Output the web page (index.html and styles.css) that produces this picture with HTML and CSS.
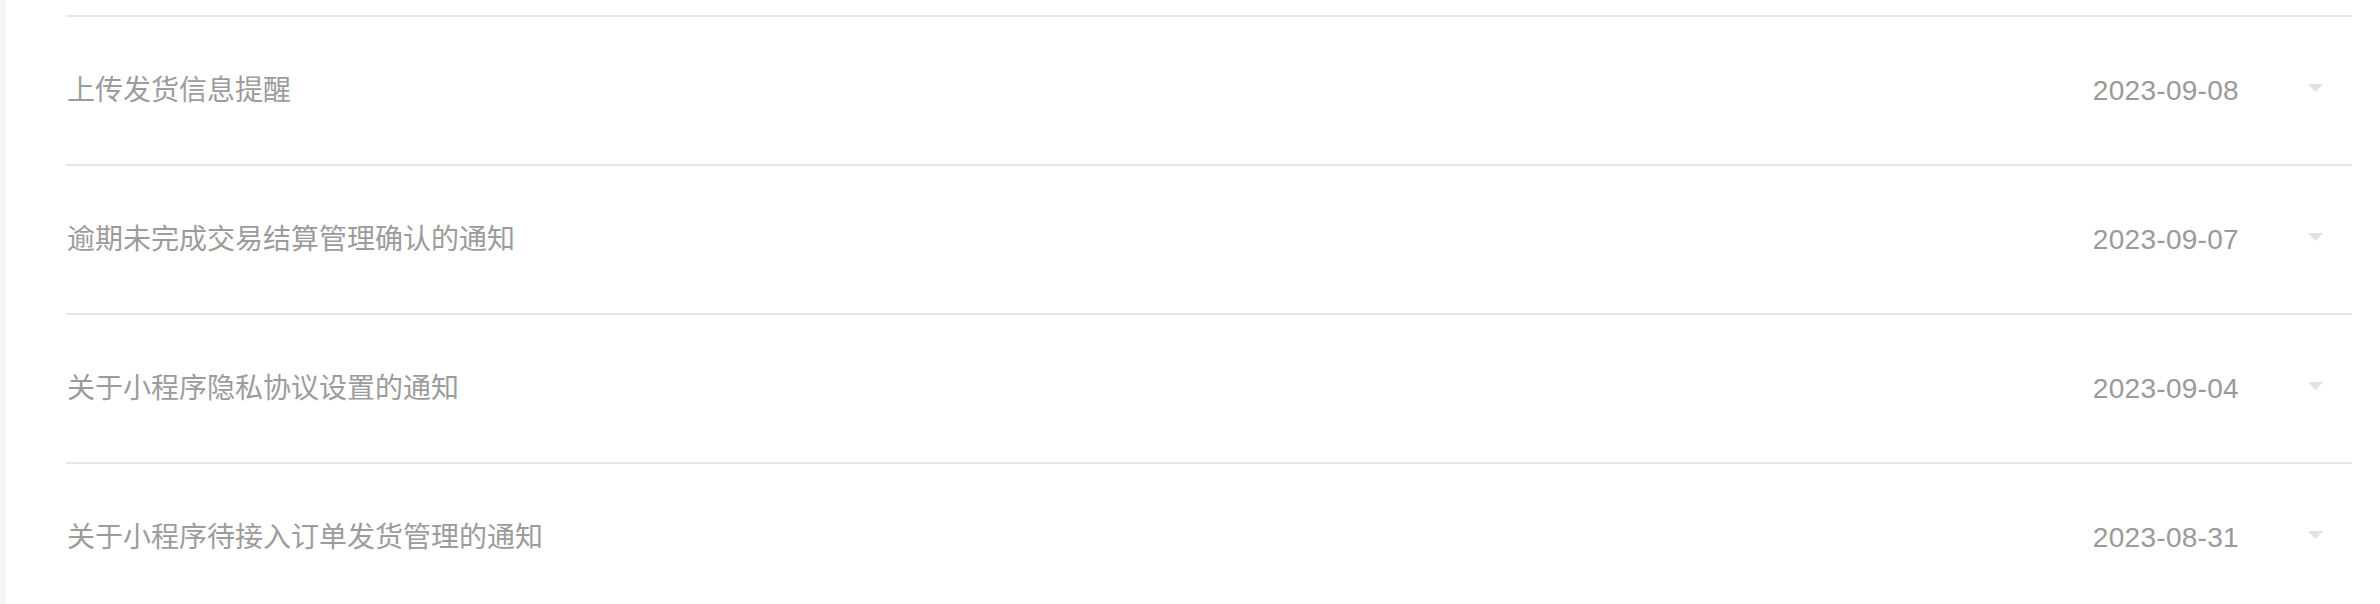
FILE: index.html
```html
<!DOCTYPE html>
<html lang="zh-CN">
<head>
<meta charset="utf-8">
<title>通知列表</title>
<link rel="stylesheet" href="styles.css">
</head>
<body>
<div class="page">
  <aside class="side"></aside>
  <main class="main">
    <ul class="notice-list">
      <li class="notice">
        <span class="notice-title">上传发货信息提醒</span>
        <span class="notice-date">2023-09-08</span>
        <svg class="caret" width="15" height="8" viewBox="0 0 15 8"><polygon points="0,0 15,0 7.5,8" /></svg>
      </li>
      <li class="notice">
        <span class="notice-title">逾期未完成交易结算管理确认的通知</span>
        <span class="notice-date">2023-09-07</span>
        <svg class="caret" width="15" height="8" viewBox="0 0 15 8"><polygon points="0,0 15,0 7.5,8" /></svg>
      </li>
      <li class="notice">
        <span class="notice-title">关于小程序隐私协议设置的通知</span>
        <span class="notice-date">2023-09-04</span>
        <svg class="caret" width="15" height="8" viewBox="0 0 15 8"><polygon points="0,0 15,0 7.5,8" /></svg>
      </li>
      <li class="notice">
        <span class="notice-title">关于小程序待接入订单发货管理的通知</span>
        <span class="notice-date">2023-08-31</span>
        <svg class="caret" width="15" height="8" viewBox="0 0 15 8"><polygon points="0,0 15,0 7.5,8" /></svg>
      </li>
    </ul>
  </main>
</div>
</body>
</html>
```
FILE: styles.css
```css
html, body {
  margin: 0;
  padding: 0;
  background: #ffffff;
  height: 100%;
  overflow: hidden;
}

body {
  font-family: "Liberation Sans", "Noto Sans CJK SC", sans-serif;
  color: #999999;
}

.page {
  display: flex;
  min-height: 100%;
}

.side {
  width: 6px;
  flex: 0 0 6px;
  background: #f5f6f8;
}

.main {
  flex: 1;
  padding: 15px 28px 0 60px;
}

.notice-list {
  list-style: none;
  margin: 0;
  padding: 0;
}

.notice {
  display: flex;
  align-items: center;
  box-sizing: content-box;
  height: 147px;
  border-top: 2px solid #e7e7eb;
  padding: 0 29px 0 1px;
}

.notice-title {
  flex: 1;
  font-size: 28px;
  line-height: 40px;
  color: #9c9c9c;
}

.notice-date {
  font-size: 28px;
  line-height: 40px;
  letter-spacing: 0.3px;
  color: #9a9a9a;
}

.caret {
  display: block;
  margin-left: 69px;
  margin-bottom: 5px;
  fill: #e1e1e7;
}
```
